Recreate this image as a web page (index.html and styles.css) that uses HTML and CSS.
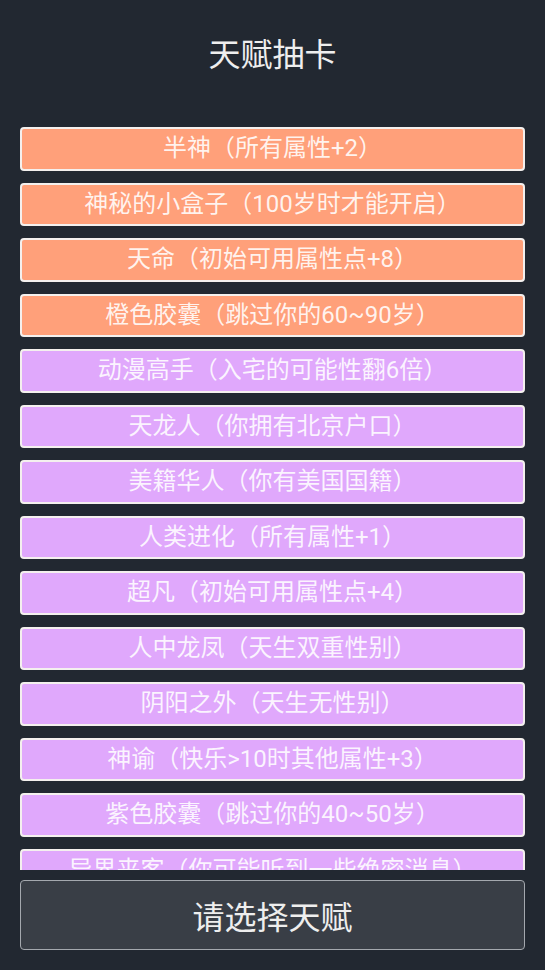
FILE: index.html
```html
<!DOCTYPE html>
<html lang="zh-CN">
<head>
  <meta charset="UTF-8">
  <title>天赋抽卡</title>
  <link rel="stylesheet" href="styles.css">
</head>
<body>
  <div class="page">
    <h1 class="title">天赋抽卡</h1>

    <!-- talent list -->
    <div class="talent-list">
      <div class="talent gold">半神（所有属性+2）</div>
      <div class="talent gold">神秘的小盒子（100岁时才能开启）</div>
      <div class="talent gold">天命（初始可用属性点+8）</div>
      <div class="talent gold">橙色胶囊（跳过你的60~90岁）</div>
      <div class="talent purple">动漫高手（入宅的可能性翻6倍）</div>
      <div class="talent purple">天龙人（你拥有北京户口）</div>
      <div class="talent purple">美籍华人（你有美国国籍）</div>
      <div class="talent purple">人类进化（所有属性+1）</div>
      <div class="talent purple">超凡（初始可用属性点+4）</div>
      <div class="talent purple">人中龙凤（天生双重性别）</div>
      <div class="talent purple">阴阳之外（天生无性别）</div>
      <div class="talent purple">神谕（快乐&gt;10时其他属性+3）</div>
      <div class="talent purple">紫色胶囊（跳过你的40~50岁）</div>
      <div class="talent purple">异界来客（你可能听到一些绝密消息）</div>
      <div class="talent purple">天选之人（神秘事件概率提升）</div>
    </div>

    <button class="confirm-btn">请选择天赋</button>
  </div>
</body>
</html>
```

FILE: styles.css
```css
html, body { margin: 0; padding: 0; background: #222831; }
body { font-family: Roboto, "Noto Sans CJK SC", sans-serif; color: #eeeeee; }
.page { width: 545px; height: 970px; padding: 0 20px; box-sizing: border-box; display: flex; flex-direction: column; }

.title { margin: 0; height: 115px; padding-top: 33px; box-sizing: border-box; text-align: center; font-size: 32px; font-weight: normal; line-height: 44px; color: #eeeeee; }

.talent-list { height: 755px; overflow: hidden; padding-top: 12px; box-sizing: border-box; display: flex; flex-direction: column; gap: 12px; }
.talent { flex: none; height: 43.5px; box-sizing: border-box; border: 2px solid #f4f0ee; border-radius: 4px; text-align: center; font-size: 24px; line-height: 38px; color: rgba(255, 255, 255, 0.88); white-space: nowrap; }
.talent.gold { background: #ffa07a; }
.talent.purple { background: #e0a8fc; }

.confirm-btn { margin-top: 10px; height: 70px; border: 1px solid #a4a8ae; border-radius: 4px; background: #393e46; color: #eeeeee; font-family: inherit; font-size: 32px; cursor: pointer; padding: 0; }
```
